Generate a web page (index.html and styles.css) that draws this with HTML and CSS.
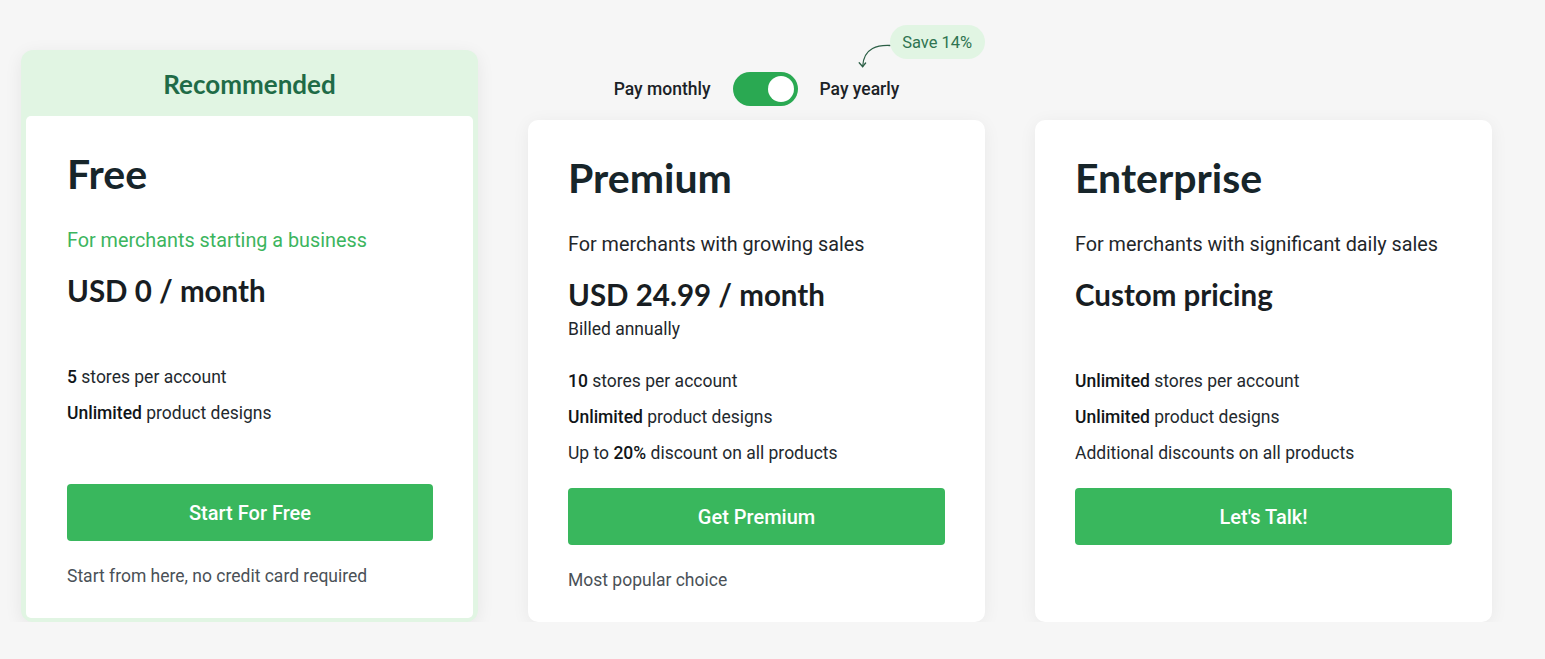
FILE: index.html
```html
<!DOCTYPE html>
<html lang="en">
<head>
<meta charset="utf-8">
<title>Pricing</title>
<link rel="stylesheet" href="styles.css">
</head>
<body>
<main class="plans">
  <section class="col">
    <div class="recommended">
      <div class="rec-title">Recommended</div>
      <div class="card card-inner">
        <h2 class="plan-name">Free</h2>
        <p class="plan-sub plan-sub-green">For merchants starting a business</p>
        <div class="price-block">
          <div class="price">USD 0 / month</div>
        </div>
        <ul class="features">
          <li><b>5</b> stores per account</li>
          <li><b>Unlimited</b> product designs</li>
        </ul>
        <button class="cta">Start For Free</button>
        <p class="note">Start from here, no credit card required</p>
      </div>
    </div>
  </section>

  <section class="col">
    <div class="col-head">
      <div class="toggle-row">
        <span class="toggle-label">Pay monthly</span>
        <span class="switch"><span class="knob"></span></span>
        <span class="toggle-label">Pay yearly</span>
        <svg class="save-arrow" width="40" height="32" viewBox="0 0 40 32" fill="none" stroke="#2c5f46" stroke-width="1.3" stroke-linecap="round" stroke-linejoin="round">
          <path d="M35 5.5 C 24 5, 8.5 7, 7.7 26.5"/>
          <path d="M4.2 22.8 L7.7 26.7 L10.6 23"/>
        </svg>
        <span class="save-pill">Save 14%</span>
      </div>
    </div>
    <div class="card">
      <h2 class="plan-name">Premium</h2>
      <p class="plan-sub">For merchants with growing sales</p>
      <div class="price-block">
        <div class="price">USD 24.99 / month</div>
        <div class="billed">Billed annually</div>
      </div>
      <ul class="features">
        <li><b>10</b> stores per account</li>
        <li><b>Unlimited</b> product designs</li>
        <li>Up to <b>20%</b> discount on all products</li>
      </ul>
      <button class="cta">Get Premium</button>
      <p class="note">Most popular choice</p>
    </div>
  </section>

  <section class="col">
    <div class="col-head"></div>
    <div class="card">
      <h2 class="plan-name">Enterprise</h2>
      <p class="plan-sub">For merchants with significant daily sales</p>
      <div class="price-block">
        <div class="price">Custom pricing</div>
      </div>
      <ul class="features">
        <li><b>Unlimited</b> stores per account</li>
        <li><b>Unlimited</b> product designs</li>
        <li>Additional discounts on all products</li>
      </ul>
      <button class="cta">Let's Talk!</button>
    </div>
  </section>
</main>
</body>
</html>
```

FILE: styles.css
```css
html, body {
  margin: 0;
  padding: 0;
  background: #f6f6f6;
}

body {
  font-family: Roboto, "Liberation Sans", sans-serif;
  color: #1f272b;
}

.plans {
  display: flex;
  align-items: stretch;
  gap: 50px;
  padding: 50px 0 0 21px;
}

.col {
  width: 457px;
  display: flex;
  flex-direction: column;
}

.col-head {
  height: 70px;
  display: flex;
  justify-content: center;
  align-items: flex-end;
  padding-bottom: 14px;
  box-sizing: border-box;
}

.card {
  flex: 1;
  background: #ffffff;
  border-radius: 10px;
  padding: 34px 40px 30px 40px;
  box-shadow: 0 3px 18px rgba(0, 0, 0, 0.06);
  display: flex;
  flex-direction: column;
}

/* recommended wrapper */
.recommended {
  flex: 1;
  display: flex;
  flex-direction: column;
  background: #e1f5e3;
  border-radius: 12px;
  padding: 0 5px 4px 5px;
  box-shadow: 0 4px 18px rgba(0, 0, 0, 0.07);
}

.rec-title {
  height: 66px;
  box-sizing: border-box;
  padding-top: 18px;
  text-align: center;
  font-family: Lato, "Inter", sans-serif;
  font-weight: 700;
  font-size: 26px;
  line-height: 32px;
  color: #1f6b47;
}

.card-inner {
  border-radius: 5px;
  box-shadow: none;
  padding-left: 41px;
  padding-right: 40px;
}

.plan-name {
  margin: 0;
  font-family: Lato, "Inter", sans-serif;
  font-weight: 700;
  font-size: 41px;
  line-height: 48px;
  color: #17252a;
}

.plan-sub {
  margin: 29px 0 0 0;
  font-size: 19.8px;
  line-height: 28px;
  color: #1f272b;
}

.plan-sub-green {
  color: #3cb55e;
}

.price-block {
  margin-top: 18px;
  height: 67px;
}

.price {
  font-family: Lato, "Inter", sans-serif;
  font-weight: 700;
  font-size: 29.5px;
  line-height: 36px;
  color: #181d22;
}

.billed {
  margin-top: 5px;
  font-size: 17.5px;
  line-height: 22px;
  color: #1f272b;
}

.features {
  list-style: none;
  margin: 25px 0 0 0;
  padding: 0;
  min-height: 96px;
  display: flex;
  flex-direction: column;
  gap: 12px;
}

.features li {
  font-size: 17.5px;
  line-height: 24px;
  color: #23292e;
}

.features b {
  font-weight: 500;
  color: #111518;
}

.cta {
  margin-top: 23px;
  height: 57px;
  width: 100%;
  border: none;
  border-radius: 4px;
  background: #39b75d;
  color: #ffffff;
  font-family: Roboto, "Liberation Sans", sans-serif;
  font-weight: 500;
  font-size: 20px;
  cursor: pointer;
}

.note {
  margin: 23px 0 0 0;
  font-size: 17.5px;
  line-height: 24px;
  color: #4a5157;
}

/* toggle */
.toggle-row {
  position: relative;
  display: flex;
  align-items: center;
  gap: 22px;
  height: 34px;
}

.toggle-label {
  font-size: 17.5px;
  font-weight: 500;
  color: #1b2226;
}

.switch {
  width: 65px;
  height: 34px;
  border-radius: 17px;
  background: #2aa952;
  display: flex;
  align-items: center;
  justify-content: flex-end;
  padding: 0 4px;
  box-sizing: border-box;
}

.knob {
  width: 26px;
  height: 26px;
  border-radius: 50%;
  background: #ffffff;
}

.save-pill {
  position: absolute;
  left: 276px;
  top: -47px;
  width: 95px;
  height: 34px;
  border-radius: 17px;
  background: #e1f5e3;
  color: #2f7451;
  font-size: 16.5px;
  line-height: 35px;
  text-align: center;
}

.save-arrow {
  position: absolute;
  left: 241px;
  top: -32px;
}
```
